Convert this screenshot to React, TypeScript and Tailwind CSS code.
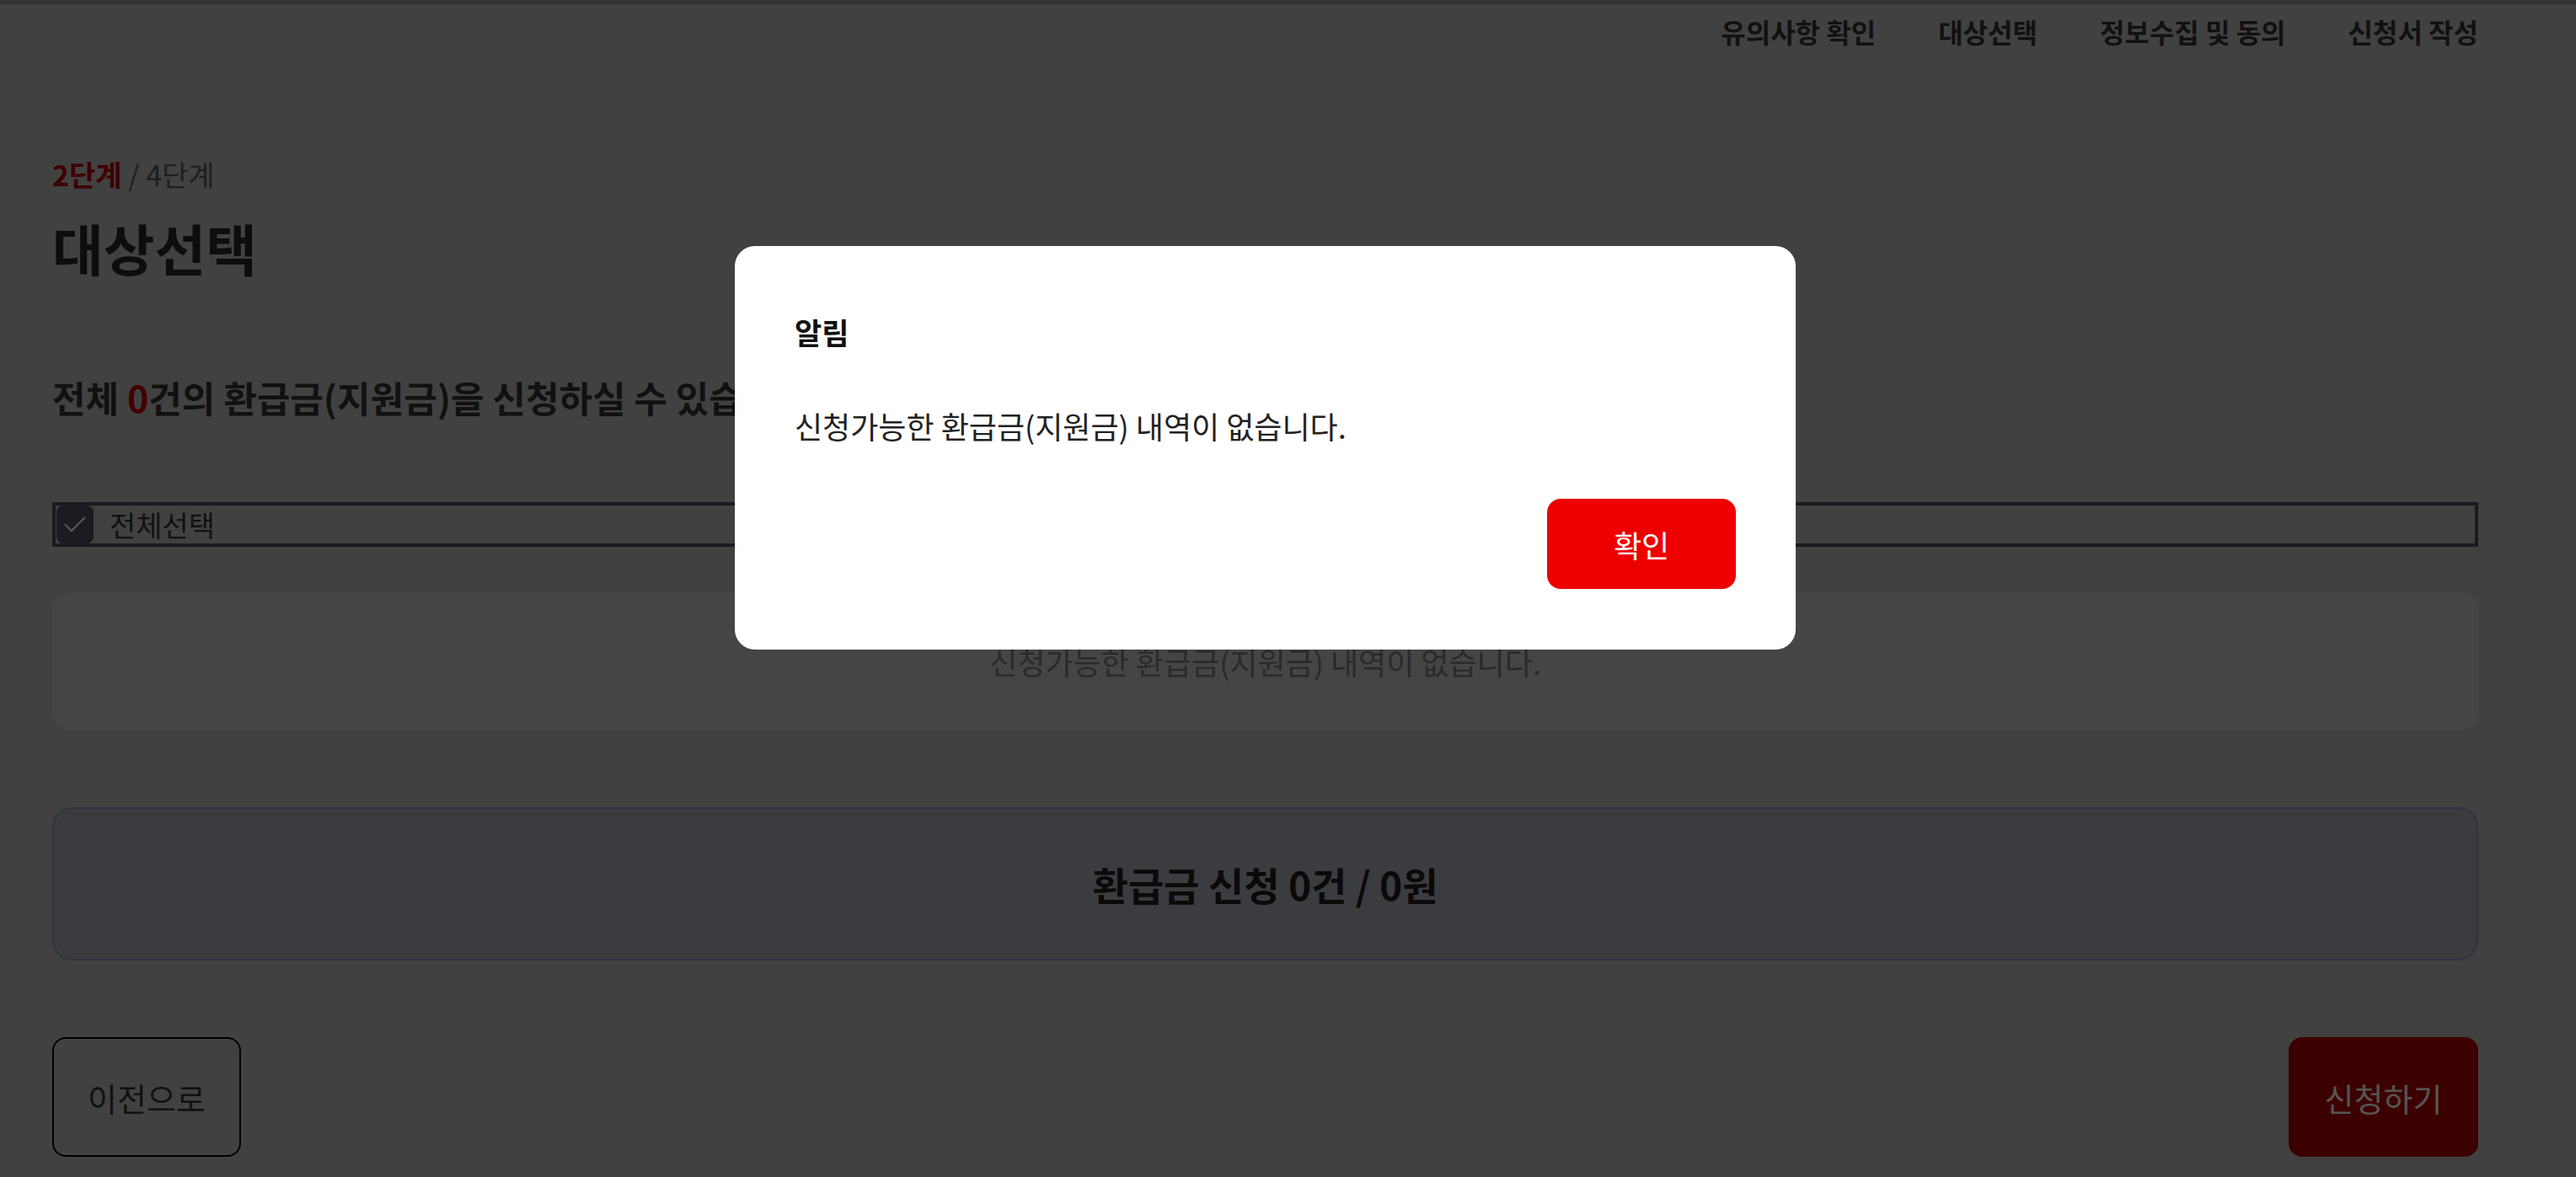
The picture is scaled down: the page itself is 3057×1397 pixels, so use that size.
import { Check } from "lucide-react";

const font = "font-['Noto_Sans_CJK_KR','Noto_Sans',sans-serif]";

const steps = ["유의사항 확인", "대상선택", "정보수집 및 동의", "신청서 작성"];

function AlertModal() {
  return (
    <div className="fixed inset-0 flex items-start justify-center pr-[54px] pt-[292px]">
      <div className="w-[1259px] rounded-[24px] bg-white px-[71px] pt-[72px] pb-[72px]">
        <p className="text-[35px] font-bold leading-[60px] text-[#111]">알림</p>
        <p className="mt-[56px] text-[36px] leading-[50px] text-[#222]">
          신청가능한 환급금(지원금) 내역이 없습니다.
        </p>
        <div className="mt-[62px] flex justify-end">
          <button className="h-[107px] w-[224px] rounded-[16px] bg-[#ee0000] text-[36px] text-white">
            확인
          </button>
        </div>
      </div>
    </div>
  );
}

export default function App() {
  return (
    <div className={`min-h-screen bg-[#414141] ${font}`}>
      <div className="border-t-[5px] border-[#333333]" />

      <nav className="flex h-[64px] items-center justify-end gap-[74px] pr-[116px]">
        {steps.map((s) => (
          <span key={s} className="text-[32px] font-bold leading-none text-[#111]">
            {s}
          </span>
        ))}
      </nav>

      <main className="flex flex-col pl-[62px] pr-[116px] pb-[24px]">
        <p className="mt-[114px] text-[34px] leading-[48px]">
          <span className="font-bold text-[#3e0000]">2단계</span>
          <span className="text-[#1e1e1e]"> / 4단계</span>
        </p>
        <h1 className="mt-[22px] text-[66px] font-bold leading-[80px] text-[#0d0d0d]">대상선택</h1>

        <p className="mt-[108px] text-[43px] font-bold leading-[60px] text-[#111]">
          전체 <span className="text-[#420000]">0</span>건의 환급금(지원금)을 신청하실 수 있습니다.
        </p>

        <label className="mt-[95px] flex h-[53px] items-center gap-[19px] border-[4px] border-[#1a1a1f] pl-[1px]">
          <span className="flex h-[45px] w-[44px] items-center justify-center rounded-[8px] bg-[#1b1b22]">
            <Check className="h-[34px] w-[34px] text-[#555]" strokeWidth={1.6} />
          </span>
          <span className="text-[34px] leading-none text-[#111]">전체선택</span>
        </label>

        <div className="mt-[54px] flex h-[164px] items-center justify-center rounded-[20px] bg-[#454545]">
          <p className="text-[36px] text-[#2a2a2a]">신청가능한 환급금(지원금) 내역이 없습니다.</p>
        </div>

        <div className="mt-[91px] flex h-[182px] items-center justify-center rounded-[24px] border-2 border-[#2f3440] bg-[#3b3c40]">
          <p className="text-[46px] font-bold text-[#0a0a0a]">환급금 신청 0건 / 0원</p>
        </div>

        <div className="mt-[91px] flex justify-between">
          <button className="h-[142px] w-[224px] rounded-[16px] border-2 border-black text-[38px] text-[#111]">
            이전으로
          </button>
          <button className="h-[142px] w-[225px] rounded-[16px] bg-[#3d0000] text-[38px] text-[#555]">
            신청하기
          </button>
        </div>
      </main>

      <AlertModal />
    </div>
  );
}
